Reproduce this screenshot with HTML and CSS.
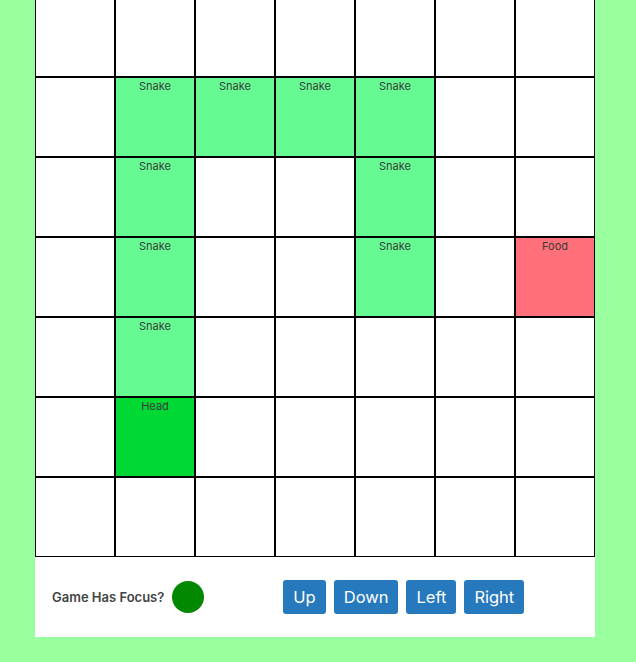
FILE: index.html
```html
<!DOCTYPE html>
<html>
<head>
<meta charset="utf-8">
<link rel="stylesheet" href="styles.css">
</head>
<body>
<div class="game">
  <div class="board">
    <div class="cell"></div><div class="cell"></div><div class="cell"></div><div class="cell"></div><div class="cell"></div><div class="cell"></div><div class="cell"></div>
    <div class="cell"></div><div class="cell snake">Snake</div><div class="cell snake">Snake</div><div class="cell snake">Snake</div><div class="cell snake">Snake</div><div class="cell"></div><div class="cell"></div>
    <div class="cell"></div><div class="cell snake">Snake</div><div class="cell"></div><div class="cell"></div><div class="cell snake">Snake</div><div class="cell"></div><div class="cell"></div>
    <div class="cell"></div><div class="cell snake">Snake</div><div class="cell"></div><div class="cell"></div><div class="cell snake">Snake</div><div class="cell"></div><div class="cell food">Food</div>
    <div class="cell"></div><div class="cell snake">Snake</div><div class="cell"></div><div class="cell"></div><div class="cell"></div><div class="cell"></div><div class="cell"></div>
    <div class="cell"></div><div class="cell head">Head</div><div class="cell"></div><div class="cell"></div><div class="cell"></div><div class="cell"></div><div class="cell"></div>
    <div class="cell"></div><div class="cell"></div><div class="cell"></div><div class="cell"></div><div class="cell"></div><div class="cell"></div><div class="cell"></div>
  </div>
  <div class="panel">
    <span class="focus-label">Game Has Focus?</span>
    <span class="focus-dot"></span>
    <div class="controls">
      <button class="btn">Up</button>
      <button class="btn">Down</button>
      <button class="btn">Left</button>
      <button class="btn">Right</button>
    </div>
  </div>
</div>
</body>
</html>
```
FILE: styles.css
```css
html, body {
  margin: 0;
  padding: 0;
  background: #99ff9f;
  font-family: Inter, "Liberation Sans", sans-serif;
  overflow: hidden;
}
.game {
  width: 560px;
  margin: -3px 0 0 35px;
  background: #fff;
}
.board {
  display: grid;
  grid-template-columns: repeat(7, 80px);
  grid-auto-rows: 80px;
}
.cell {
  box-sizing: border-box;
  border: 1px solid #000;
  background: #fff;
  font-size: 11px;
  color: #3a3a3a;
  text-align: center;
  padding-top: 2px;
  line-height: 13px;
}
.snake { background: #66fa92; }
.head { background: #00d933; }
.food { background: #ff707a; }
.panel {
  height: 80px;
  display: flex;
  align-items: center;
  padding-left: 17px;
  box-sizing: border-box;
}
.focus-label {
  font-size: 13px;
  font-weight: 600;
  color: #444;
}
.focus-dot {
  width: 32px;
  height: 32px;
  border-radius: 50%;
  background: #008800;
  margin-left: 8px;
}
.controls {
  display: flex;
  gap: 8px;
  margin-left: 79px;
}
.btn {
  height: 34px;
  padding: 0 10px;
  border: none;
  border-radius: 3px;
  background: #2779bd;
  color: #fff;
  font-family: Inter, "Liberation Sans", sans-serif;
  font-size: 16.5px;
}
```
